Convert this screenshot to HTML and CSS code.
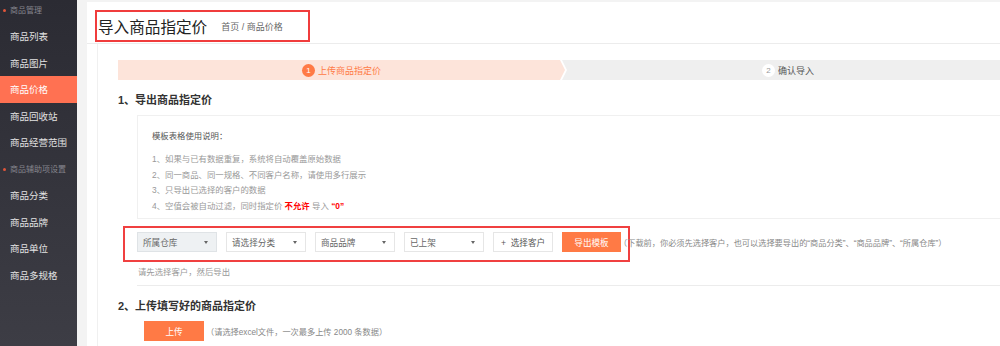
FILE: index.html
```html
<!DOCTYPE html>
<html lang="zh-CN">

<head>
    <meta charset="UTF-8">
    <meta name="viewport" content="width=device-width, initial-scale=1.0">
    <title>导入商品指定价</title>
    <link rel="stylesheet" href="styles.css">
</head>

<body>

    <div class="layout">
        <!-- 左侧菜单 -->
        <aside class="sidebar">
            <ul class="menu">
                <li class="menu-group">商品管理</li>
                <li class="menu-item">商品列表</li>
                <li class="menu-item">商品图片</li>
                <li class="menu-item active">商品价格</li>
                <li class="menu-item">商品回收站</li>
                <li class="menu-item">商品经营范围</li>
                <li class="menu-group">商品辅助项设置</li>
                <li class="menu-item">商品分类</li>
                <li class="menu-item">商品品牌</li>
                <li class="menu-item">商品单位</li>
                <li class="menu-item">商品多规格</li>
            </ul>
        </aside>

        <main class="main">
            <header class="page-head">
                <div class="title-box">
                    <h1>导入商品指定价</h1>
                    <span class="crumb">首页 / 商品价格</span>
                </div>
            </header>

            <section class="panel">
                <div class="panel-inner">
                    <!-- 步骤条 -->
                    <div class="steps">
                        <div class="step step-current">
                            <span class="step-num">1</span>上传商品指定价
                        </div>
                        <div class="step step-next">
                            <span class="step-num">2</span>确认导入
                        </div>
                    </div>

                    <h2 class="section-title">1、导出商品指定价</h2>

                    <div class="notice">
                        <p class="notice-title">模板表格使用说明：</p>
                        <ol class="notice-list">
                            <li>1、如果与已有数据重复，系统将自动覆盖原始数据</li>
                            <li>2、同一商品、同一规格、不同客户名称，请使用多行展示</li>
                            <li>3、只导出已选择的客户的数据</li>
                            <li>4、空值会被自动过滤，同时指定价 <b class="warn">不允许</b> 导入 <b class="warn">“0”</b></li>
                        </ol>
                    </div>

                    <div class="filter-row">
                        <div class="select select-active">所属仓库<span class="caret"></span></div>
                        <div class="select">请选择分类<span class="caret"></span></div>
                        <div class="select">商品品牌<span class="caret"></span></div>
                        <div class="select">已上架<span class="caret"></span></div>
                        <button type="button" class="btn btn-plain">+&nbsp; 选择客户</button>
                        <button type="button" class="btn btn-orange">导出模板</button>
                        <span class="hint">（下载前，你必须先选择客户，也可以选择要导出的“商品分类”、“商品品牌”、“所属仓库”）</span>
                    </div>

                    <p class="tip">请先选择客户，然后导出</p>

                    <div class="divider"></div>

                    <h2 class="section-title">2、上传填写好的商品指定价</h2>

                    <div class="upload-row">
                        <button type="button" class="btn btn-orange btn-upload">上传</button>
                        <span class="hint">（请选择excel文件，一次最多上传 2000 条数据）</span>
                    </div>
                </div>
            </section>
        </main>
    </div>

</body>

</html>
```

FILE: styles.css
```css
body {
    margin: 0;
    font-family: "Liberation Sans", "Noto Sans CJK SC", sans-serif;
    background-color: #f3f3f3;
    overflow: hidden;
}

ul,
ol,
p,
h1,
h2 {
    margin: 0;
    padding: 0;
    list-style: none;
}

.layout {
    display: flex;
    width: 1000px;
    height: 346px;
    overflow: hidden;
}

/* sidebar */
.sidebar {
    width: 77px;
    flex-shrink: 0;
    background: linear-gradient(to bottom, #2b2b33, #3d3d45);
    overflow: hidden;
}

.menu {
    margin-top: -3.5px;
}

.menu li {
    height: 26.5px;
    display: flex;
    align-items: center;
    padding-left: 10px;
}

.menu-group {
    position: relative;
    font-size: 8px;
    color: #85858d;
}

.menu-group::before {
    content: "";
    position: absolute;
    left: 3px;
    top: 12px;
    width: 3px;
    height: 3px;
    border-radius: 50%;
    background-color: #e0553a;
}

.menu-item {
    font-size: 9.5px;
    color: #e2e2e2;
}

.menu-item.active {
    background-color: #ff7152;
    color: #fff;
}

/* main */
.main {
    flex: 1;
    min-width: 0;
    padding-left: 10px;
    display: flex;
    flex-direction: column;
}

.page-head {
    margin-top: 2px;
    height: 42px;
    background-color: #fff;
    border-bottom: 1px solid #ececec;
    padding: 8px 0 0 8px;
    box-sizing: border-box;
}

.title-box {
    display: inline-flex;
    align-items: center;
    width: 215px;
    height: 32px;
    border: 2px solid #f03c3c;
    box-sizing: border-box;
    padding-left: 1px;
}

.title-box h1 {
    font-size: 15.6px;
    font-weight: normal;
    color: #222;
}

.crumb {
    margin-left: 14px;
    font-size: 9px;
    color: #666;
}

.panel {
    flex: 1;
    background-color: #fff;
    padding-left: 10px;
}

.panel-inner {
    height: 100%;
    border-left: 1px solid #f0f0f0;
    padding: 16px 0 0 20px;
    box-sizing: border-box;
}

/* steps */
.steps {
    display: flex;
    height: 20px;
    width: 890px;
}

.step {
    display: flex;
    align-items: center;
    justify-content: center;
    font-size: 9px;
}

.step-current {
    width: 447px;
    flex-shrink: 0;
    background-color: #fde4da;
    color: #ff7a45;
    clip-path: polygon(0 0, calc(100% - 5px) 0, 100% 50%, calc(100% - 5px) 100%, 0 100%);
}

.step-next {
    flex: 1;
    margin-left: -3px;
    background-color: #efefef;
    color: #555;
    clip-path: polygon(0 0, 100% 0, 100% 100%, 0 100%, 5px 50%);
    padding-left: 6px;
}

.step-num {
    width: 13px;
    height: 13px;
    border-radius: 50%;
    display: inline-flex;
    align-items: center;
    justify-content: center;
    font-size: 8px;
    margin-right: 3px;
}

.step-current .step-num {
    background-color: #ff7a45;
    color: #fff;
}

.step-next .step-num {
    background-color: #fff;
    color: #999;
}

.section-title {
    margin-top: 13px;
    font-size: 11px;
    line-height: 14px;
    font-weight: bold;
    color: #333;
}

/* notice */
.notice {
    margin: 8px 0 0 19px;
    width: 900px;
    height: 104px;
    border: 1px solid #f0f0f0;
    box-sizing: border-box;
    padding: 14px 0 0 14px;
    font-size: 8.4px;
}

.notice-title {
    color: #555;
    line-height: 12px;
}

.notice-list {
    margin-top: 10px;
    color: #999;
}

.notice-list li {
    line-height: 15.7px;
}

.warn {
    color: #f00;
}

/* filter row */
.filter-row {
    display: flex;
    align-items: center;
    gap: 9px;
    width: 507px;
    height: 36px;
    margin: 7px 0 0 5px;
    border: 2px solid #f04040;
    box-sizing: border-box;
    padding: 0 0 4px 12px;
}

.select {
    position: relative;
    flex-shrink: 0;
    width: 80px;
    height: 20px;
    border: 1px solid #e6e6e6;
    box-sizing: border-box;
    padding-left: 5px;
    display: flex;
    align-items: center;
    font-size: 8.6px;
    color: #666;
    background-color: #fff;
}

.select-active {
    background-color: #eef1f3;
    border-color: #dfe3e6;
}

.caret {
    position: absolute;
    right: 8px;
    top: 8px;
    border-left: 2px solid transparent;
    border-right: 2px solid transparent;
    border-top: 3px solid #666;
}

.btn {
    flex-shrink: 0;
    height: 20px;
    font-family: inherit;
    font-size: 8.6px;
    box-sizing: border-box;
    padding: 0;
    cursor: pointer;
}

.btn-plain {
    width: 60px;
    background-color: #fff;
    border: 1px solid #e6e6e6;
    color: #555;
}

.btn-orange {
    width: 59px;
    background-color: #ff7a45;
    border: none;
    color: #fff;
}

.hint {
    flex-shrink: 0;
    margin-left: -11px;
    font-size: 8.2px;
    color: #888;
    white-space: nowrap;
}

.tip {
    margin: 4px 0 0 20px;
    font-size: 8.4px;
    line-height: 12px;
    color: #999;
}

.divider {
    margin: 7px 0 0 19px;
    height: 1px;
    background-color: #ececec;
}

.upload-row {
    display: flex;
    align-items: center;
    margin: 8px 0 0 26px;
}

.btn-upload {
    width: 60px;
}

.upload-row .hint {
    margin-left: 2px;
}
```
